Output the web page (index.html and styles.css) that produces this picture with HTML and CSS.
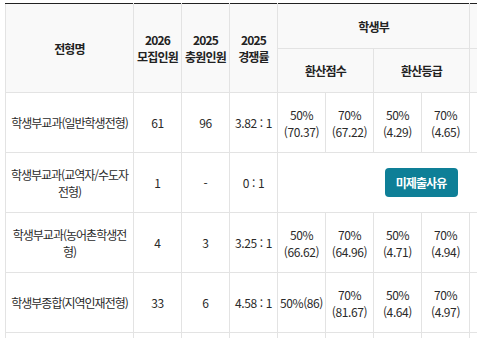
FILE: index.html
```html
<!DOCTYPE html>
<html lang="ko">
<head>
<meta charset="utf-8">
<title>전형별 입시결과</title>
<link rel="stylesheet" href="styles.css">
</head>
<body>
<div class="wrap">
  <table class="tbl">
    <colgroup>
      <col class="c-name">
      <col class="c-num" span="11">
    </colgroup>
    <thead>
      <tr class="h1">
        <th rowspan="2">전형명</th>
        <th rowspan="2">2026<br>모집인원</th>
        <th rowspan="2">2025<br>충원인원</th>
        <th rowspan="2">2025<br>경쟁률</th>
        <th colspan="4">학생부</th>
        <th colspan="2"></th>
        <th colspan="2"></th>
      </tr>
      <tr class="h2">
        <th colspan="2">환산점수</th>
        <th colspan="2">환산등급</th>
        <th colspan="2"></th>
        <th colspan="2"></th>
      </tr>
    </thead>
    <tbody>
      <tr>
        <td class="name">학생부교과(일반학생전형)</td>
        <td>61</td>
        <td>96</td>
        <td>3.82 : 1</td>
        <td>50%<br>(70.37)</td>
        <td>70%<br>(67.22)</td>
        <td>50%<br>(4.29)</td>
        <td>70%<br>(4.65)</td>
        <td></td><td></td><td></td><td></td>
      </tr>
      <tr>
        <td class="name">학생부교과(교역자/수도자<br>전형)</td>
        <td>1</td>
        <td>-</td>
        <td>0 : 1</td>
        <td colspan="6"><button type="button" class="btn">미제출사유</button></td>
        <td></td><td></td>
      </tr>
      <tr>
        <td class="name">학생부교과(농어촌학생전<br>형)</td>
        <td>4</td>
        <td>3</td>
        <td>3.25 : 1</td>
        <td>50%<br>(66.62)</td>
        <td>70%<br>(64.96)</td>
        <td>50%<br>(4.71)</td>
        <td>70%<br>(4.94)</td>
        <td></td><td></td><td></td><td></td>
      </tr>
      <tr>
        <td class="name">학생부종합(지역인재전형)</td>
        <td>33</td>
        <td>6</td>
        <td>4.58 : 1</td>
        <td>50%(86)</td>
        <td>70%<br>(81.67)</td>
        <td>50%<br>(4.64)</td>
        <td>70%<br>(4.97)</td>
        <td></td><td></td><td></td><td></td>
      </tr>
      <tr>
        <td class="name"></td>
        <td></td><td></td><td></td><td></td><td></td><td></td><td></td>
        <td></td><td></td><td></td><td></td>
      </tr>
    </tbody>
  </table>
</div>
</body>
</html>
```

FILE: styles.css
```css
html, body {
  margin: 0;
  padding: 0;
  overflow: hidden;
  background: #fff;
}

body {
  font-family: "Noto Sans CJK KR", "Noto Sans", sans-serif;
  color: #2a2a2a;
}

.wrap {
  padding: 3px 0 0 5px;
}

.tbl {
  border-collapse: collapse;
  table-layout: fixed;
  width: 656px;
  font-size: 12px;
  line-height: 17px;
  letter-spacing: -0.4px;
}

.c-name { width: 128px; }
.c-num { width: 48px; }

.tbl th,
.tbl td {
  border: 1px solid #e3e3e3;
  padding: 0 2px;
  text-align: center;
  vertical-align: middle;
}

.tbl th {
  background: #f9f9f9;
  color: #222;
  font-weight: 700;
  letter-spacing: -0.8px;
}

.h1 th {
  border-top: 1px solid #222;
  height: 44px;
}

.h2 th {
  height: 43px;
}

.tbl td {
  height: 59px;
}

.tbl td.name {
  letter-spacing: -1px;
}

.btn {
  display: inline-block;
  height: 29px;
  padding: 0 12px 0 11px;
  border: 0;
  border-radius: 4px;
  background: #0e7f97;
  color: #fff;
  font-family: inherit;
  font-size: 12px;
  font-weight: 700;
  letter-spacing: -0.9px;
  line-height: 29px;
  cursor: pointer;
}
```
